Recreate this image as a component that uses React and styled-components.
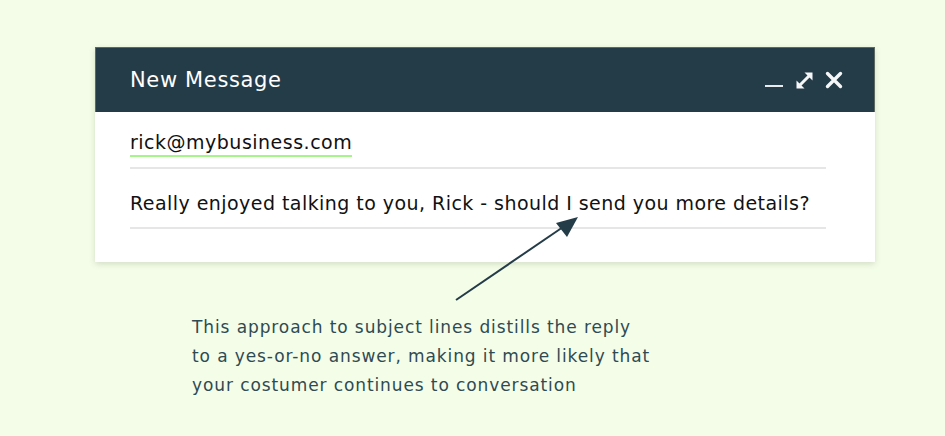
import styled, { createGlobalStyle } from "styled-components";

const navy = "#243c48";
const mint = "#f4fde8";

const Global = createGlobalStyle`
  body {
    margin: 0;
    background: ${mint};
    font-family: "DejaVu Sans", "Noto Sans", sans-serif;
  }
`;

const Page = styled.main`
  position: relative;
  min-height: 436px;
  padding: 47px 0 0 95px;
  box-sizing: border-box;
`;

const Card = styled.section`
  width: 780px;
  background: #ffffff;
  box-shadow: 0 2px 6px rgba(60, 80, 50, 0.18);
`;

const Header = styled.header`
  height: 65px;
  background: ${navy};
  border: 1px solid #5c6a62;
  border-bottom: none;
  box-sizing: border-box;
  display: flex;
  align-items: center;
  justify-content: space-between;
  padding: 0 31px 0 34px;

  h1 {
    margin: 0;
    color: #ffffff;
    font-size: 21px;
    font-weight: 400;
    letter-spacing: 0.65px;
  }
`;

const Controls = styled.div`
  display: flex;
  align-items: center;
  gap: 12px;
`;

const Body = styled.div`
  padding: 0 49px 33px 35px;
`;

const Field = styled.div`
  height: ${(p) => p.$h}px;
  border-bottom: 2px solid #e6e6e6;
  box-sizing: border-box;
  display: flex;
  align-items: center;
  padding-top: ${(p) => p.$pt || 0}px;
  font-size: 19px;
  letter-spacing: 0.45px;
  color: #111111;
`;

const Email = styled.span`
  border-bottom: 2px solid #a6f58a;
  padding-bottom: 1px;
  line-height: 24px;
  letter-spacing: 0.5px;
`;

const Note = styled.p`
  margin: 51px 0 0 97px;
  color: #2f4a52;
  font-size: 17px;
  letter-spacing: 0.9px;
  line-height: 29px;
`;

const Arrow = styled.svg`
  position: absolute;
  left: 0;
  top: 0;
  pointer-events: none;
`;

export default function App() {
  return (
    <>
      <Global />
      <Page>
        <Card>
          <Header>
            <h1>New Message</h1>
            <Controls>
              <svg width="19" height="20" viewBox="0 0 19 20">
                <rect x="0" y="15" width="18" height="2" fill="#e8ecee" />
              </svg>
              <svg width="17" height="17" viewBox="0 0 17 17" fill="#f4f6f7">
                <path d="M16.5 0.5H8.5L16.5 8.5Z" />
                <path d="M0.5 16.5H8.5L0.5 8.5Z" />
                <path d="M3 14L14 3" stroke="#f4f6f7" strokeWidth="3" />
              </svg>
              <svg width="18" height="18" viewBox="0 0 18 18">
                <path d="M2.5 2.5l13 13M15.5 2.5l-13 13" stroke="#f4f6f7" strokeWidth="3.4" strokeLinecap="round" />
              </svg>
            </Controls>
          </Header>
          <Body>
            <Field $h={57} $pt={7}>
              <Email>rick@mybusiness.com</Email>
            </Field>
            <Field $h={60} $pt={10}>
              Really enjoyed talking to you, Rick - should I send you more details?
            </Field>
          </Body>
        </Card>
        <Note>
          This approach to subject lines distills the reply
          <br />
          to a yes-or-no answer, making it more likely that
          <br />
          your costumer continues to conversation
        </Note>
        <Arrow width="945" height="436" viewBox="0 0 945 436">
          <line x1="456" y1="300" x2="566" y2="225" stroke={navy} strokeWidth="2" />
          <path d="M578 217 L556 223 L567 237 Z" fill={navy} />
        </Arrow>
      </Page>
    </>
  );
}
